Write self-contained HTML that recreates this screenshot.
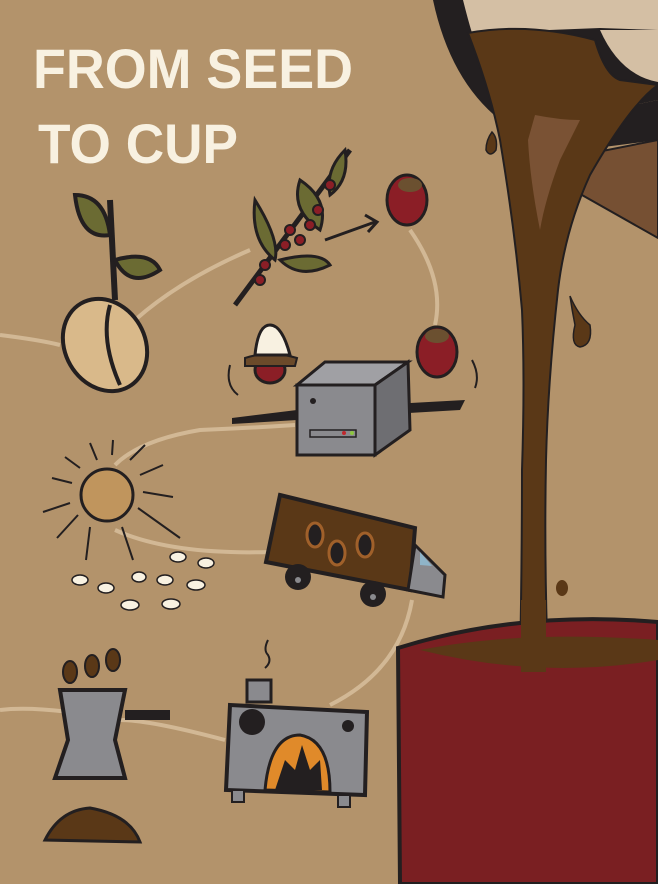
<!DOCTYPE html>
<html><head><meta charset="utf-8"><style>
html,body{margin:0;padding:0;background:#b3936b;}
svg{display:block}
.t{font-family:"Liberation Sans",sans-serif;font-weight:bold;fill:#f8f1e1;font-size:56px}
</style></head><body>
<svg width="658" height="884" viewBox="0 0 658 884" xmlns="http://www.w3.org/2000/svg">
<rect width="658" height="884" fill="#b3936b"/>
<!-- path trail -->
<g fill="none" stroke="#d9c2a0" stroke-width="4" opacity="0.8">
<path d="M0,335 Q40,340 60,345 M135,320 Q180,280 250,250"/>
<path d="M410,230 Q445,280 435,325"/>
<path d="M295,425 Q250,428 200,430 Q140,440 115,465"/>
<path d="M115,530 Q170,555 270,552"/>
<path d="M412,600 Q400,670 330,705"/>
<path d="M225,740 Q150,720 120,720 Q40,705 0,710"/>
</g>
<!-- pot -->
<path d="M433,0 Q450,80 500,120 L600,112 L658,100 L658,0 Z" fill="#231f20"/>
<path d="M463,0 Q468,20 472,33 L600,28 L658,30 L658,0 Z" fill="#d4bfa4"/>
<path d="M600,30 Q620,75 658,82 L658,30Z" fill="#d4bfa4"/>
<path d="M580,150 L658,140 L658,100 L600,112Z" fill="#231f20"/>
<path d="M582,155 L658,140 L658,238 L582,195 Z" fill="#765033" stroke="#231f20" stroke-width="2"/>
<!-- stream -->
<path d="M468,33 Q530,22 595,40 Q605,75 620,80 L658,85 Q630,105 590,175 Q565,230 558,290 Q548,380 546,460 Q544,560 548,665 L520,665 Q522,560 522,470 Q525,380 522,310 Q515,230 500,140 Q490,90 468,33 Z" fill="#5a3817" stroke="#231f20" stroke-width="2"/>
<path d="M535,115 Q560,120 580,120 L560,160 Q545,200 540,230 Q530,180 528,140Z" fill="#7a5234"/>
<path d="M492,132 Q498,138 496,150 Q490,158 486,150 Q486,140 492,132Z" fill="#5a3817" stroke="#231f20" stroke-width="1.5"/>
<path d="M570,296 Q578,315 590,325 Q593,345 580,347 Q570,345 575,325 Q572,310 570,296Z" fill="#5a3817" stroke="#231f20" stroke-width="1.5"/>
<ellipse cx="562" cy="588" rx="6" ry="8" fill="#5a3817"/>
<!-- cup -->
<path d="M398,648 Q520,610 658,622 L658,884 L400,884 Z" fill="#7a1f22" stroke="#231f20" stroke-width="4"/>
<path d="M420,650 Q520,630 658,640 L658,660 Q540,680 420,650 Z" fill="#5a3817"/>
<rect x="521" y="600" width="25" height="72" fill="#5a3817"/>
<!-- title -->
<text class="t" x="33" y="88" textLength="320" lengthAdjust="spacingAndGlyphs">FROM SEED</text>
<text class="t" x="38" y="163" textLength="200" lengthAdjust="spacingAndGlyphs">TO CUP</text>
<!-- seedling -->
<path d="M110,200 L115,300" stroke="#231f20" stroke-width="6"/>
<path d="M75,195 Q105,195 110,235 Q80,240 75,195Z" fill="#6b6b33" stroke="#231f20" stroke-width="4"/>
<path d="M115,260 Q150,250 160,270 Q130,290 115,260Z" fill="#6b6b33" stroke="#231f20" stroke-width="4"/>
<ellipse cx="105" cy="345" rx="40" ry="48" transform="rotate(-30 105 345)" fill="#d9b98a" stroke="#231f20" stroke-width="4"/>
<path d="M110,305 Q100,340 120,385" stroke="#231f20" stroke-width="4" fill="none"/>
<!-- branch -->
<path d="M235,305 L350,150" stroke="#231f20" stroke-width="5"/>
<path d="M255,200 Q280,240 275,260 Q250,240 255,200Z M300,180 Q330,200 320,230 Q290,210 300,180Z M345,150 Q350,180 330,195 Q325,170 345,150Z M280,260 Q320,250 330,265 Q300,280 280,260Z" fill="#6b6b33" stroke="#231f20" stroke-width="3"/>
<g fill="#8b1e26" stroke="#231f20" stroke-width="2">
<circle cx="290" cy="230" r="5"/><circle cx="300" cy="240" r="5"/><circle cx="285" cy="245" r="5"/><circle cx="310" cy="225" r="5"/><circle cx="318" cy="210" r="5"/><circle cx="265" cy="265" r="5"/><circle cx="260" cy="280" r="5"/><circle cx="330" cy="185" r="5"/>
</g>
<path d="M325,240 L375,222 M365,215 L377,222 L368,232" stroke="#231f20" stroke-width="3" fill="none"/>
<ellipse cx="407" cy="200" rx="20" ry="25" fill="#8b1e26" stroke="#231f20" stroke-width="3"/>
<ellipse cx="410" cy="185" rx="12" ry="7" fill="#6b5030"/>
<ellipse cx="437" cy="352" rx="20" ry="25" fill="#8b1e26" stroke="#231f20" stroke-width="3"/>
<ellipse cx="437" cy="336" rx="12" ry="7" fill="#6b5030"/>
<ellipse cx="270" cy="370" rx="15" ry="13" fill="#8b1e26" stroke="#231f20" stroke-width="3"/>
<path d="M245,358 Q270,350 297,358 L295,366 L245,366Z" fill="#6b4a2a" stroke="#231f20" stroke-width="2"/>
<path d="M255,355 Q258,325 270,325 Q282,325 290,355Z" fill="#f8f1e1" stroke="#231f20" stroke-width="3"/>
<path d="M230,365 Q225,385 238,395 M472,360 Q480,375 475,388" stroke="#231f20" stroke-width="2" fill="none"/>
<!-- pulper -->
<path d="M232,418 L297,410 L297,420 L232,424Z M375,405 L465,400 L460,410 L375,415Z" fill="#231f20"/>
<path d="M297,385 L325,362 L408,362 L375,385Z" fill="#a0a0a4" stroke="#231f20" stroke-width="3"/>
<path d="M375,385 L408,362 L410,430 L375,455Z" fill="#6e6e72" stroke="#231f20" stroke-width="3"/>
<path d="M297,385 L375,385 L375,455 L297,455Z" fill="#8a8a8e" stroke="#231f20" stroke-width="3"/>
<circle cx="313" cy="401" r="3" fill="#231f20"/>
<rect x="310" y="430" width="46" height="7" fill="#8a8a8e" stroke="#231f20" stroke-width="1.5"/>
<circle cx="344" cy="433" r="2" fill="#c0272d"/><circle cx="352" cy="433" r="2" fill="#8dc63f"/>
<!-- sun -->
<circle cx="107" cy="495" r="26" fill="#c0955d" stroke="#231f20" stroke-width="3"/>
<g stroke="#231f20" stroke-width="2">
<path d="M90,443 L97,460 M113,440 L112,455 M130,460 L145,445 M140,475 L163,465 M143,492 L173,497 M138,508 L180,538 M122,527 L133,560 M90,527 L86,560 M78,515 L57,538 M70,503 L43,512 M72,483 L52,478 M80,468 L65,457"/>
</g>
<g fill="#f8f1e1" stroke="#231f20" stroke-width="1.5">
<ellipse cx="178" cy="557" rx="8" ry="5"/><ellipse cx="206" cy="563" rx="8" ry="5"/><ellipse cx="139" cy="577" rx="7" ry="5"/><ellipse cx="165" cy="580" rx="8" ry="5"/><ellipse cx="196" cy="585" rx="9" ry="5"/><ellipse cx="80" cy="580" rx="8" ry="5"/><ellipse cx="106" cy="588" rx="8" ry="5"/><ellipse cx="130" cy="605" rx="9" ry="5"/><ellipse cx="171" cy="604" rx="9" ry="5"/>
</g>
<!-- truck -->
<path d="M280,495 L415,528 L410,590 L266,562Z" fill="#5a3817" stroke="#231f20" stroke-width="4"/>
<g fill="#231f20" stroke="#a0602a" stroke-width="3"><ellipse cx="315" cy="535" rx="8" ry="12"/><ellipse cx="337" cy="553" rx="8" ry="12"/><ellipse cx="365" cy="545" rx="8" ry="12"/></g>
<path d="M415,545 L445,575 L443,597 L408,590Z" fill="#8a8a8e" stroke="#231f20" stroke-width="3"/>
<path d="M420,552 L432,566 L420,565Z" fill="#8fb4c8"/>
<circle cx="298" cy="577" r="13" fill="#231f20"/><circle cx="373" cy="594" r="13" fill="#231f20"/>
<circle cx="298" cy="580" r="3" fill="#8a8a8e"/><circle cx="373" cy="597" r="3" fill="#8a8a8e"/>
<!-- roaster -->
<path d="M268,640 Q263,650 268,655 Q272,662 265,668" stroke="#231f20" stroke-width="2" fill="none"/>
<rect x="247" y="680" width="24" height="22" fill="#8a8a8e" stroke="#231f20" stroke-width="3"/>
<path d="M230,705 L367,712 L365,795 L226,790Z" fill="#8a8a8e" stroke="#231f20" stroke-width="4"/>
<rect x="232" y="790" width="12" height="12" fill="#8a8a8e" stroke="#231f20" stroke-width="2"/>
<rect x="338" y="795" width="12" height="12" fill="#8a8a8e" stroke="#231f20" stroke-width="2"/>
<path d="M265,790 Q270,735 300,735 Q330,740 330,792Z" fill="#e08a2a" stroke="#231f20" stroke-width="3"/>
<path d="M275,790 L285,760 L295,770 L302,745 L310,770 L320,760 L322,790Z" fill="#231f20"/>
<circle cx="252" cy="722" r="13" fill="#231f20"/><circle cx="348" cy="726" r="6" fill="#231f20"/>
<!-- moka -->
<path d="M60,690 L125,690 L115,740 L125,778 L55,778 L68,740Z" fill="#8a8a8e" stroke="#231f20" stroke-width="4"/>
<rect x="125" y="710" width="45" height="10" fill="#231f20"/>
<g fill="#5a3817" stroke="#231f20" stroke-width="2"><ellipse cx="70" cy="672" rx="7" ry="11"/><ellipse cx="92" cy="666" rx="7" ry="11"/><ellipse cx="113" cy="660" rx="7" ry="11"/></g>
<path d="M45,840 Q60,810 90,808 Q130,815 140,842Z" fill="#5a3817" stroke="#231f20" stroke-width="3"/>
</svg>
</body></html>
